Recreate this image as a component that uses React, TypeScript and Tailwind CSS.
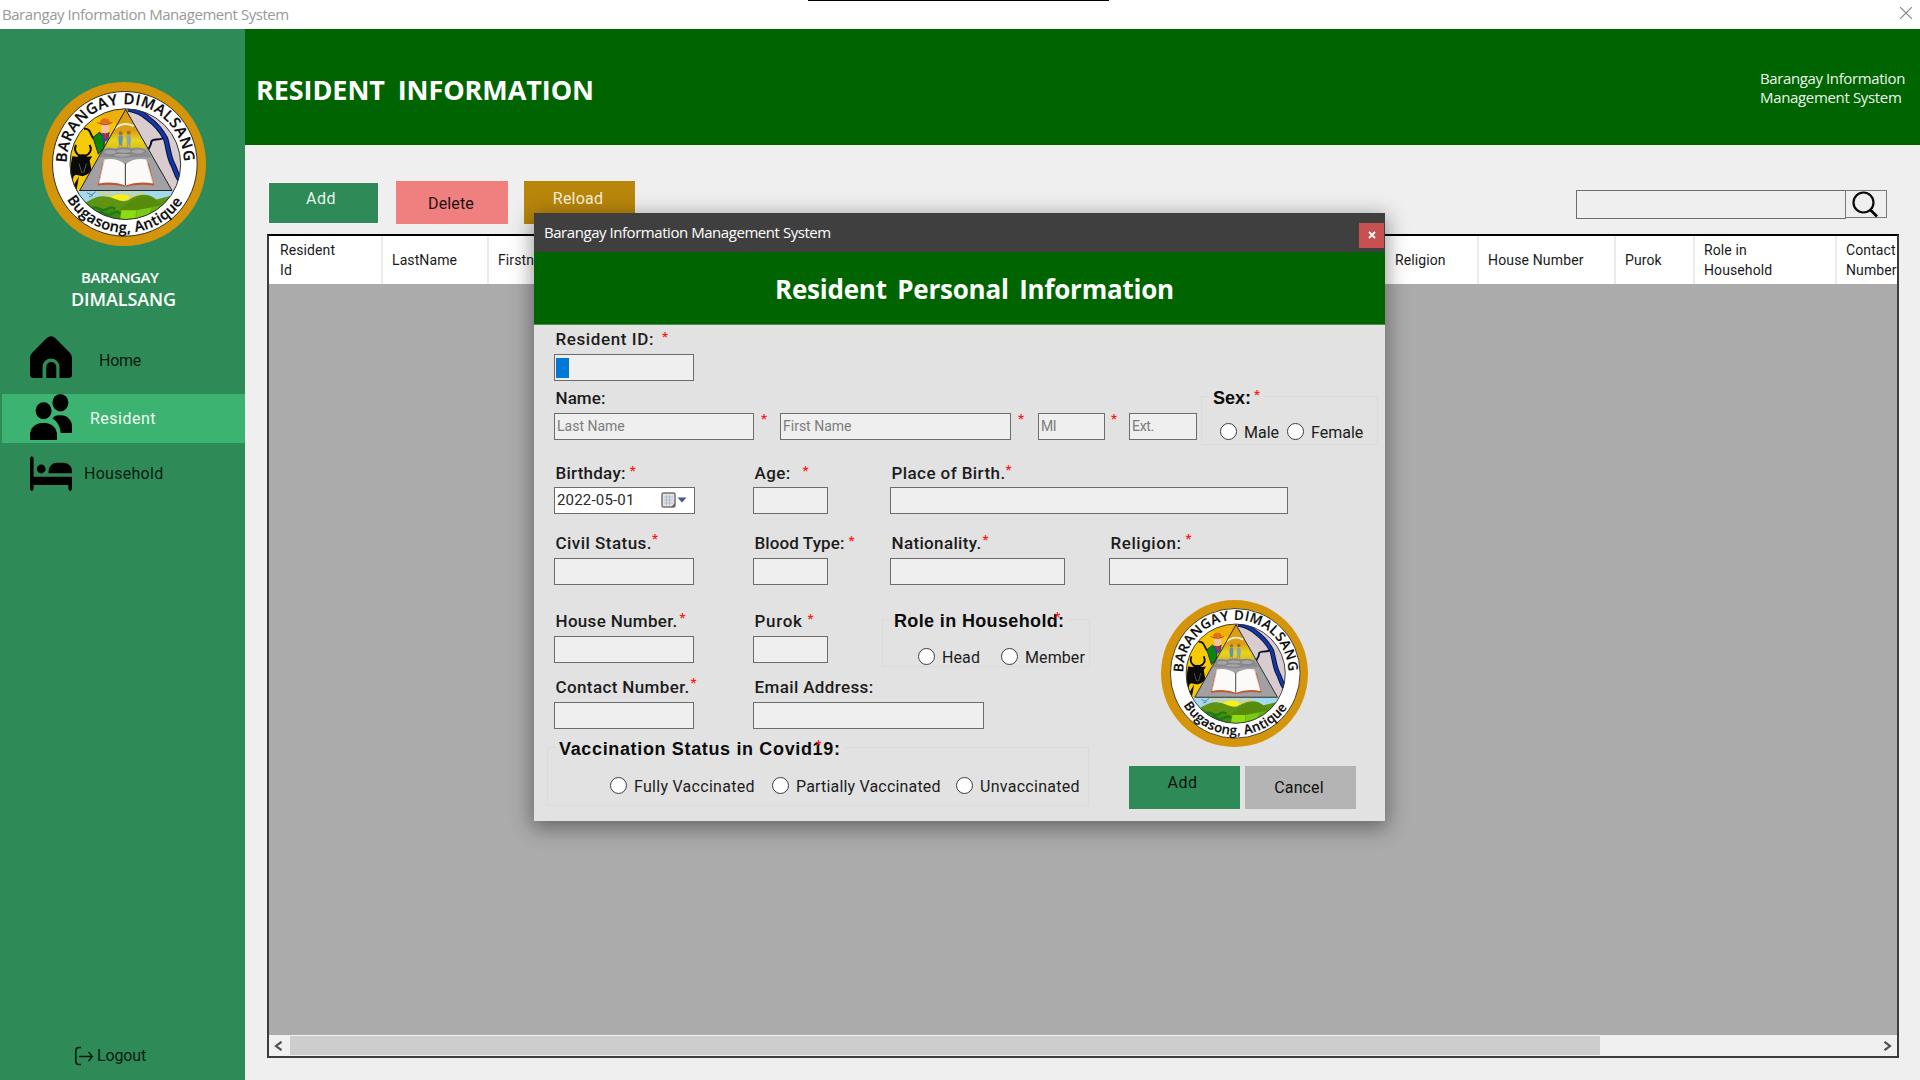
import type { ReactNode } from "react";

function Emblem({ id, size }: { id: string; size: number }) {
  return (
    <svg width={size} height={size} viewBox="17 17.5 492 492" className="block shrink-0">
      <defs>
        <clipPath id={id + "c"}>
          <circle cx="267" cy="264" r="166" />
        </clipPath>
        <linearGradient id={id + "g"} x1="0" y1="0" x2="0" y2="1">
          <stop offset="0" stopColor="#d99a10" />
          <stop offset="0.55" stopColor="#d9a017" />
          <stop offset="0.8" stopColor="#e8d51c" />
          <stop offset="1" stopColor="#d9c21c" />
        </linearGradient>
        <path id={id + "t"} d="M91 260 A176 176 0 0 1 443 260" />
        <path id={id + "b"} d="M92 370 A205 205 0 0 0 447 364" />
      </defs>
      <circle cx="263" cy="263.5" r="246" fill="#d4950b" />
      <circle cx="265.500" cy="263" r="217" fill="#fff" stroke="#3a3320" strokeWidth="3" />
      <g clipPath={`url(#${id}c)`}>
        <rect x="95" y="90" width="175" height="260" fill="#f4c402" />
        <path d="M150 90H268V150L200 130Z" fill="#eeb008" />
        <rect x="268" y="90" width="175" height="260" fill="#d8cccf" />
        <rect x="95" y="343" width="345" height="100" fill="#a5d9ee" />
        <g stroke="#f5cf3a" strokeWidth="4">
          <path d="M252 375L185 347M252 375L212 344M252 375L240 344M252 375L266 344M252 375L294 344M252 375L322 350" />
        </g>
        <ellipse cx="253" cy="364" rx="27" ry="10" fill="#f7ee1a" />
        <path d="M95 400C150 385 170 358 202 360C240 363 250 382 275 372C310 350 340 352 360 370L440 350V440H95Z" fill="#5f9412" />
        <path d="M250 400C300 360 320 352 350 366C365 375 375 385 385 392L300 410Z" fill="#558c0b" />
        <path d="M150 380C170 400 210 400 250 402L250 440H120Z" fill="#3c8c14" />
        <path d="M165 398q12-8 24 0t24 0t24 0M180 412q12-8 24 0t24 0t24 0" fill="none" stroke="#1d7a14" strokeWidth="7" />
        <path d="M256 402H300L296 440H250Z" fill="#8edb12" />
        <path d="M300 402L385 385L350 430H300Z" fill="#62b012" />
        <path d="M300 402L345 395L330 440H300Z" fill="#7cc81a" />
        <path d="M152 350l14 6l12-9M158 362l12-4" fill="none" stroke="#5c7f92" strokeWidth="3" />
        <path d="M100 225C120 215 125 165 145 158C165 155 160 175 172 185L180 232L130 343H100Z" fill="#f7cb08" />
        <path d="M143 158C165 155 160 178 173 188" fill="none" stroke="#111" strokeWidth="6" />
        <path d="M170 184L190 168L204 190L203 215L186 234Z" fill="#0b8410" stroke="#0a3f08" strokeWidth="3" />
        <path d="M193 172L220 168L216 190L202 200Z" fill="#31489c" />
        <path d="M200 172L214 172L208 192Z" fill="#d7271d" />
        <ellipse cx="207" cy="155" rx="13" ry="17" fill="#f6c3a0" />
        <path d="M181 137Q205 148 230 137Q226 146 206 147Q186 146 181 137Z" fill="#c45110" />
        <path d="M191 139Q192 126 206 127Q220 126 221 139Q206 147 191 139Z" fill="#e0701c" />
        <path d="M119 206C112 222 120 236 132 238H146C160 236 168 222 160 206" fill="none" stroke="#0a0a0a" strokeWidth="6" />
        <path
          d="M108 240L122 242L139 234L154 242L168 240L160 252L166 285L152 295L139 300L118 296L112 300L106 330L100 300L104 262Z"
          fill="#0a0a0a"
        />
        <path d="M128 262L136 288H143L150 262" fill="none" stroke="#777" strokeWidth="2" />
        <path d="M110 330L128 300L120 345Z" fill="#111" />
        <path d="M275 98C305 104 322 114 334 126C356 142 376 165 388 188C396 215 397 240 408 262C418 280 418 295 430 310" fill="none" stroke="#0a1030" strokeWidth="16" />
        <path d="M275 98C305 104 322 114 334 126C356 142 376 165 388 188C396 215 397 240 408 262C418 280 418 295 430 310" fill="none" stroke="#1237a8" strokeWidth="10" />
        <path d="M382 186C362 194 350 186 345 196C346 205 340 212 336 220" fill="none" stroke="#0a1030" strokeWidth="6" />
        <path d="M268 100L130 343H407Z" fill="#a0a0a5" />
        <path d="M268 100L204 216H332Z" fill={`url(#${id}g)`} />
        <path d="M234 158Q262 134 292 150" fill="none" stroke="#f8edc8" strokeWidth="6" />
        <g>
          <circle cx="253" cy="171" r="6" fill="#a9673d" />
          <circle cx="277" cy="170" r="6" fill="#a9673d" />
          <path d="M247 178h12v14l-2 16h-8l-3-16z" fill="#5b93b8" />
          <path d="M271 178h12l1 14l-3 16h-8l-2-16z" fill="#86a5b4" />
          <path d="M249 206v10M256 206v10M273 206v10M280 206v10" stroke="#c98a5c" strokeWidth="3" />
        </g>
        <path d="M199 222Q215 210 235 218Q262 208 285 216Q312 210 330 222L344 243L190 243Z" fill="#8d8d8f" />
        <g fill="#a5a5a5" stroke="#77777a" strokeWidth="2">
          <ellipse cx="222" cy="228" rx="20" ry="8" />
          <ellipse cx="262" cy="225" rx="24" ry="7" />
          <ellipse cx="305" cy="226" rx="20" ry="8" />
          <ellipse cx="258" cy="237" rx="28" ry="6" />
        </g>
        <path d="M198 262L184 328Q230 322 268 332Q306 322 354 328L338 262Z" fill="#c0552d" />
        <path d="M204 250Q240 244 267 264Q294 244 330 250L350 322Q304 314 268 328Q232 314 188 322Z" fill="#fbfaf8" />
        <path d="M204 250L188 320M330 250L350 320" stroke="#d8c2b6" strokeWidth="2.500" />
        <path d="M267 262V327" stroke="#333" strokeWidth="3" />
        <path d="M268 100L130 343H407Z" fill="none" stroke="#222" strokeWidth="3" />
      </g>
      <circle cx="267" cy="264" r="166" fill="none" stroke="#333" strokeWidth="3" />
      <g fill="#0c0c0c" fontFamily="'Open Sans'" fontWeight="600" stroke="#0c0c0c" strokeWidth="0.600">
        <text fontSize="45" textLength="549" lengthAdjust="spacing">
          <textPath href={`#${id}t`} textLength="549">BARANGAY DIMALSANG</textPath>
        </text>
        <text fontSize="44" textLength="414" lengthAdjust="spacing">
          <textPath href={`#${id}b`} textLength="414">Bugasong, Antique</textPath>
        </text>
      </g>
    </svg>
  );
}

function Star({ className }: { className: string }) {
  return <span className={`text-[13px] leading-[12px] font-bold text-[#ff1a1a] ${className}`}>*</span>;
}

function Label({ children, className }: { children: ReactNode; className: string }) {
  return (
    <span className={`h-[18px] text-[17px] leading-[18px] font-medium whitespace-nowrap text-[#1c1c1c] ${className}`}>
      {children}
    </span>
  );
}

function Box({ className, children }: { className: string; children?: ReactNode }) {
  return (
    <div
      className={`flex h-[27px] shrink-0 items-center border border-[#6c6c6c] bg-[#efefef] pl-[2px] text-[14px] whitespace-nowrap text-[#7c7c7c] ${className}`}
    >
      {children}
    </div>
  );
}

function Field({
  label,
  track,
  star,
  width,
  gap = "mt-[6px]",
  children,
}: {
  label: string;
  track: string;
  star?: string;
  width: string;
  gap?: string;
  children?: ReactNode;
}) {
  return (
    <div className="flex flex-col">
      <div className="flex h-[18px] items-start pl-[1.5px]">
        <Label className={track}>{label}</Label>
        {star && <Star className={star} />}
      </div>
      <div className={gap}>{children ?? <Box className={width} />}</div>
    </div>
  );
}

function Radio({ label, className, track }: { label: string; className: string; track: string }) {
  return (
    <div className={`flex shrink-0 items-center ${className}`}>
      <span className="block h-[17px] w-[17px] shrink-0 rounded-full border border-[#3c3c3c] bg-white" />
      <span className={`pt-[3px] pl-[7px] text-[16px] leading-[18px] whitespace-nowrap text-[#1c1c1c] ${track}`}>{label}</span>
    </div>
  );
}

function Group({
  legend,
  star,
  legendClass,
  className,
  children,
}: {
  legend: string;
  star: string;
  legendClass: string;
  className: string;
  children: ReactNode;
}) {
  return (
    <div className={`relative border border-[#dbdbdb] ${className}`}>
      <div className="absolute -top-[8px] left-[8px] flex h-[18px] items-start bg-[#e2e2e2] px-[3px]">
        <span
          className={`font-['Liberation_Sans'] text-[18px] leading-[19px] font-bold whitespace-nowrap text-[#0c0c0c] ${legendClass}`}
        >
          {legend}
        </span>
        <Star className={star} />
      </div>
      {children}
    </div>
  );
}

function HeadCell({ className, children }: { className: string; children?: ReactNode }) {
  return (
    <div
      className={`flex shrink-0 items-center border-r-2 border-[#ebebeb] pl-[9px] text-[14px] leading-[20px] tracking-[0.1px] text-[#1a1a1a] ${className}`}
    >
      {children}
    </div>
  );
}

function Dialog() {
  return (
    <div className="absolute top-[213px] left-[534px] flex h-[608px] w-[851px] flex-col bg-[#e2e2e2] shadow-[0_5px_20px_2px_rgba(0,0,0,0.4)]">
      <div className="flex h-[39px] shrink-0 justify-between bg-[#3f3f3f]">
        <span className="pt-[9px] pl-[10px] font-['Open_Sans'] text-[15px] leading-[20px] tracking-[-0.45px] text-white">
          Barangay Information Management System
        </span>
        <div className="mt-[10px] mr-[1px] flex h-[25px] w-[25px] items-center justify-center bg-[#c75050] pb-px">
          <svg width="8" height="8" viewBox="0 0 8 8" stroke="#fff" strokeWidth="1.8">
            <path d="M1 1L7 7M7 1L1 7" />
          </svg>
        </div>
      </div>
      <div className="flex h-[73px] shrink-0 justify-start border-b border-[#4d8f4d] bg-[#006400] pt-[19px]">
        <h2 className="pl-[241px] font-['Open_Sans'] text-[26px] leading-[36px] font-bold tracking-[-0.23px] [word-spacing:4px] whitespace-nowrap text-white">
          Resident Personal Information
        </h2>
      </div>

      <div className="flex flex-col pt-[5px] pl-[20px]">
        <Field label="Resident ID:" track="tracking-[0.6px]" star="ml-[8px] mt-[1px]" width="w-[140px]">
          <Box className="w-[140px]">
            <span className="-ml-[1px] block h-[20px] w-[13px] bg-[#0078d7]" />
          </Box>
        </Field>

        <div className="mt-[8px] flex">
          <div className="flex flex-col">
            <div className="flex h-[18px] pl-[1.5px]">
              <Label className="tracking-[0.07px]">Name:</Label>
            </div>
            <div className="mt-[6px] flex">
              <Box className="w-[200px]">Last Name</Box>
              <Star className="ml-[7px] w-[19px]" />
              <Box className="w-[231px]">First Name</Box>
              <Star className="ml-[7px] w-[20px]" />
              <Box className="w-[67px]">
                <span className="tracking-[-0.4px]">MI</span>
              </Box>
              <Star className="ml-[6px] w-[18px]" />
              <Box className="w-[68px]">
                <span className="tracking-[-0.3px]">Ext.</span>
              </Box>
            </div>
          </div>
          <Group legend="Sex:" legendClass="" star="ml-[3px]" className="mt-[7px] ml-[4px] -mb-[7px] h-[49px] w-[177px]">
            <div className="flex pt-[24px] pl-[18px]">
              <Radio label="Male" className="w-[67px]" track="" />
              <Radio label="Female" className="" track="" />
            </div>
          </Group>
        </div>

        <div className="mt-[24px] grid grid-cols-[199px_137px_219px_1fr]">
          <Field label="Birthday:" track="tracking-[0.24px]" star="ml-[4px] mt-[1px]" width="" gap="mt-[5px]">
            <div className="flex h-[27px] w-[141px] items-center border border-[#6c6c6c] bg-white pl-[2px]">
              <span className="w-[104px] text-[15px] tracking-[0.18px] text-[#2a2a2a]">2022-05-01</span>
              <svg width="26" height="17" viewBox="0 0 26 17">
                <rect x="1" y="1" width="13" height="14" rx="1.500" fill="#dfe3e8" stroke="#7a6f70" strokeWidth="1.500" />
                <path d="M3 5H12M3 8H12M3 11H12M5.500 3V13M8.500 3V13" stroke="#a9b3c0" strokeWidth="0.800" />
                <path d="M10 15L14 11V15Z" fill="#6b6263" />
                <path d="M16.500 5.500H25.500L21 10.500Z" fill="#44598f" />
              </svg>
            </div>
          </Field>
          <Field label="Age:" track="tracking-[0.38px]" star="ml-[12px] mt-[1px]" width="w-[75px]" gap="mt-[5px]" />
          <Field label="Place of Birth." track="tracking-[0.42px]" star="ml-[0px]" width="w-[398px]" gap="mt-[5px]" />
        </div>

        <div className="mt-[20px] grid grid-cols-[199px_137px_219px_1fr]">
          <Field label="Civil Status." track="tracking-[0.46px]" star="ml-[0px] -mt-[1px]" width="w-[140px]" />
          <Field label="Blood Type:" track="tracking-[0.09px]" star="ml-[4px] mt-[1px]" width="w-[75px]" />
          <Field label="Nationality." track="tracking-[0.35px]" star="ml-[1px]" width="w-[175px]" />
          <Field label="Religion:" track="tracking-[0.55px]" star="ml-[4px] -mt-[1px]" width="w-[179px]" />
        </div>

        <div className="flex">
          <div className="flex w-[575px] flex-col pt-[27px]">
            <div className="grid grid-cols-[199px_137px_1fr]">
              <Field label="House Number." track="tracking-[0.32px]" star="ml-[2px]" width="w-[140px]" />
              <Field label="Purok" track="tracking-[0.68px]" star="ml-[5px] mt-[1px]" width="w-[75px]" />
              <Group
                legend="Role in Household:"
                legendClass="tracking-[0.36px]"
                star="-ml-[10px] -mt-[1px] w-[10px]"
                className="mt-[7px] -mb-[4px] -ml-[8px] h-[48px] w-[208px]"
              >
                <div className="flex pt-[26px] pl-[35px]">
                  <Radio label="Head" className="w-[83px]" track="tracking-[0.1px]" />
                  <Radio label="Member" className="-mr-4" track="tracking-[0.1px]" />
                </div>
              </Group>
            </div>
            <div className="mt-[15px] grid grid-cols-[199px_1fr]">
              <Field label="Contact Number." track="tracking-[0.38px]" star="ml-[1px] -mt-[1px]" width="w-[140px]" />
              <Field label="Email Address:" track="tracking-[0.37px]" width="w-[231px]" />
            </div>
            <Group
              legend="Vaccination Status in Covid19:"
              legendClass="tracking-[0.65px]"
              star="-ml-[25px] -mt-[1px] w-[25px]"
              className="mt-[18px] -ml-[7px] h-[59px] w-[542px]"
            >
              <div className="flex pt-[27px] pl-[62px]">
                <Radio label="Fully Vaccinated" className="w-[162px]" track="tracking-[0.28px]" />
                <Radio label="Partially Vaccinated" className="w-[184px]" track="tracking-[0.18px]" />
                <Radio label="Unvaccinated" className="" track="tracking-[0.28px]" />
              </div>
            </Group>
          </div>
          <div className="flex flex-col">
            <div className="mt-[15px] ml-[32px]">
              <Emblem id="d" size={147} />
            </div>
            <div className="mt-[19px] flex gap-[5px] text-[16px] leading-[18px] text-[#101010]">
              <div className="flex h-[43px] w-[111px] justify-center bg-[#2e8b57] pt-[8px] pr-[4px] tracking-[0.5px]">Add</div>
              <div className="flex h-[43px] w-[111px] justify-center bg-[#b4b4b4] pt-[13px] pr-[3px] tracking-[0.13px]">Cancel</div>
            </div>
          </div>
        </div>
      </div>
    </div>
  );
}

export default function App() {
  return (
    <div className="relative flex h-[1080px] w-[1920px] flex-col overflow-hidden bg-[#efefef] font-['Roboto',sans-serif]">
      <div className="relative flex h-[29px] shrink-0 justify-between bg-white">
        <span className="pt-[4px] pl-[2px] font-['Open_Sans'] text-[15px] leading-[20px] tracking-[-0.45px] text-[#999]">
          Barangay Information Management System
        </span>
        <div className="absolute top-0 left-[808px] h-[1px] w-[301px] bg-black" />
        <svg className="mt-[7px] mr-[8px]" width="12" height="12" viewBox="0 0 12 12" stroke="#808080" strokeWidth="1.100">
          <path d="M0 0L12 12M12 0L0 12" />
        </svg>
      </div>

      <div className="flex flex-1">
        <aside className="flex w-[245px] shrink-0 flex-col bg-[#2e8b57]">
          <div className="mt-[53px] ml-[42px]">
            <Emblem id="s" size={164} />
          </div>
          <div className="mt-[21px] flex flex-col font-['Open_Sans'] font-semibold whitespace-nowrap text-white">
            <span className="ml-[81px] text-[15px] leading-[20px] tracking-[-0.4px]">BARANGAY</span>
            <span className="ml-[71px] text-[18px] leading-[24px] tracking-[-0.1px]">DIMALSANG</span>
          </div>
          <nav className="flex flex-col text-[16px] text-[#0a1a10]">
            <div className="mt-[25px] flex h-[42px] pl-[30px]">
              <svg width="42" height="42" viewBox="0 0 42 42" fill="#000">
                <path d="M0 22Q0 19 2 17L16.500 2.200Q21-1.500 25.500 2.200L40 17Q42 19 42 22V38.500Q42 42 38.500 42H29.500V31a8.500 8.500 0 0 0-17 0V42H3.500Q0 42 0 38.500Z" />
                <path d="M16.300 42V31a5 5 0 0 1 10 0V42Z" />
              </svg>
              <span className="mt-[16px] ml-[27px] leading-[18px] tracking-[-0.27px]">Home</span>
            </div>
            <div className="mt-[16px] ml-[2px] flex h-[49px] bg-[#3cb371] pl-[28px] text-[#effaf3]">
              <svg width="42" height="46" viewBox="0 0 42 46" fill="#000">
                <ellipse cx="13.600" cy="16.700" rx="8" ry="8.500" />
                <ellipse cx="30.400" cy="8.700" rx="8" ry="8.700" />
                <path d="M0 46V41a12 12 0 0 1 12-12H15a12 12 0 0 1 12 12V46Z" />
                <path d="M22.500 24.500Q24.500 21.200 29 21.200H31a11 11 0 0 1 11 11V39H30.800Q30 29 22.500 24.500Z" />
              </svg>
              <span className="mt-[16px] ml-[18px] leading-[18px] tracking-[0.5px]">Resident</span>
            </div>
            <div className="mt-[13px] flex h-[35px] pl-[30px]">
              <svg width="42" height="35" viewBox="0 0 42 35" fill="#000">
                <path d="M0 2Q1.800-1.500 3.600 2V20.700H42V33Q40.200 37 38.400 33V29H3.600V33Q1.800 37 0 33Z" />
                <circle cx="11.200" cy="13" r="4.400" />
                <path d="M18.600 17.200V15A8.300 8.300 0 0 1 27 6.800H34A8.300 8.300 0 0 1 42 15V17.200Z" />
              </svg>
              <span className="mt-[9px] ml-[12px] leading-[18px] tracking-[0.28px]">Household</span>
            </div>
          </nav>
          <div className="mt-auto mb-[14px] flex items-center pl-[74px] text-[16px] text-[#0a1a10]">
            <svg width="20" height="20" viewBox="0 0 20 20" fill="none" stroke="#0a1a10" strokeWidth="1.700">
              <path d="M7 1.500H5Q1.800 1.500 1.800 5V15Q1.800 18.500 5 18.500H7" />
              <path d="M5 10.500H18M14.500 6L18.300 10.500L14.500 15" strokeWidth="1.400" />
            </svg>
            <span className="pl-[3px] leading-[18px] tracking-[-0.15px]">Logout</span>
          </div>
        </aside>

        <main className="flex flex-1 flex-col">
          <header className="flex h-[116px] shrink-0 justify-between bg-[#006400] font-['Open_Sans'] text-white">
            <h1 className="pt-[43px] pl-[11px] text-[27px] leading-[36px] font-bold tracking-[-0.08px] [word-spacing:6px]">
              RESIDENT INFORMATION
            </h1>
            <div className="mt-[40px] mr-[9px] flex w-[151px] flex-col text-[15px] leading-[19px] whitespace-nowrap text-[#eef6ee]">
              <span className="tracking-[-0.39px]">Barangay Information</span>
              <span className="tracking-[-0.34px]">Management System</span>
            </div>
          </header>

          <div className="flex h-[89px] shrink-0 pt-[36px] pl-[23px] text-[16px] leading-[18px]">
            <div className="mt-[1px] flex h-[42px] w-[111px] justify-center border border-[#fafafa] bg-[#2e8b57] pt-[7px] pr-[5px] tracking-[0.5px] text-[#e8f3ec]">
              Add
            </div>
            <div className="ml-[17px] flex h-[43px] w-[112px] justify-center bg-[#f08080] pt-[14px] pr-[2px] tracking-[0.15px] text-[#1c1010]">
              Delete
            </div>
            <div className="ml-[16px] flex h-[43px] w-[111px] justify-center bg-[#b8860b] pt-[9px] pr-[3px] tracking-[0.2px] text-[#f7efda]">
              Reload
            </div>
            <div className="mt-[9px] mr-[33px] ml-auto flex">
              <div className="h-[29px] w-[270px] border border-[#6c6c6c]" />
              <div className="-ml-[1px] flex h-[28px] w-[42px] justify-center border border-[#7a7a7a] pr-[2px]">
                <svg width="28" height="27" viewBox="0 0 28 27" fill="none" stroke="#0a0a0a" strokeWidth="2.200">
                  <circle cx="12.500" cy="11.500" r="10" />
                  <path d="M19.500 19L26 25.500" strokeWidth="2.800" />
                </svg>
              </div>
            </div>
          </div>

          <div className="ml-[22px] flex h-[824px] w-[1632px] flex-col border-2 border-[#3c3c3c] border-t-black bg-[#ababab]">
            <div className="flex h-[48px] shrink-0 overflow-hidden bg-white">
              <HeadCell className="w-[114px] pl-[11px]">
                Resident
                <br />
                Id
              </HeadCell>
              <HeadCell className="w-[106px]">LastName</HeadCell>
              <HeadCell className="w-[880px] pl-[8px]">Firstname</HeadCell>
              <HeadCell className="w-[110px] pl-[26px]">Religion</HeadCell>
              <HeadCell className="w-[137px]">
                <span className="tracking-[0.15px]">House Number</span>
              </HeadCell>
              <HeadCell className="w-[79px]">Purok</HeadCell>
              <HeadCell className="w-[142px] pr-[60px]">Role in Household</HeadCell>
              <HeadCell className="w-[90px] pr-[30px]">Contact Number</HeadCell>
            </div>
            <div className="mt-auto flex h-[21px] shrink-0 items-center bg-[#f0f0f0] text-[#505050]">
              <svg className="ml-[5px]" width="9" height="10" viewBox="0 0 9 10" fill="none" stroke="#505050" strokeWidth="2.200">
                <path d="M7.500 0.800L2 5L7.500 9.200" />
              </svg>
              <div className="ml-[7px] h-[19px] w-[1310px] bg-[#cdcdcd]" />
              <svg className="mr-[5px] ml-auto" width="9" height="10" viewBox="0 0 9 10" fill="none" stroke="#505050" strokeWidth="2.200">
                <path d="M1.500 0.800L7 5L1.500 9.200" />
              </svg>
            </div>
          </div>
        </main>
      </div>

      <Dialog />
    </div>
  );
}
